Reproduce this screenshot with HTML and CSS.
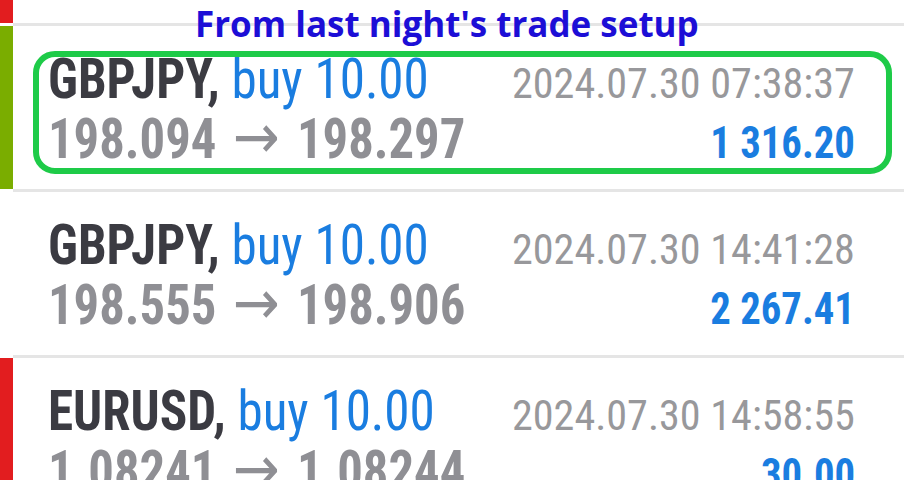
FILE: index.html
```html
<!DOCTYPE html>
<html lang="en">
<head>
<meta charset="utf-8">
<title>Trade history</title>
<link rel="stylesheet" href="styles.css">
</head>
<body>
<div class="screen">
  <h1 class="caption">From last night's trade setup</h1>
  <div class="list">
    <div class="row row-partial">
      <div class="bar bar-red"></div>
      <div class="body"></div>
    </div>
    <div class="row">
      <div class="bar bar-green"></div>
      <div class="body">
        <div class="line">
          <span class="deal"><b class="sym">GBPJPY,</b> <span class="type">buy 10.00</span></span>
          <span class="time">2024.07.30 07:38:37</span>
        </div>
        <div class="line">
          <span class="prices">198.094<span class="arrow">→</span>198.297</span>
          <span class="profit">1 316.20</span>
        </div>
      </div>
      <div class="marker"></div>
    </div>
    <div class="row">
      <div class="bar"></div>
      <div class="body">
        <div class="line">
          <span class="deal"><b class="sym">GBPJPY,</b> <span class="type">buy 10.00</span></span>
          <span class="time">2024.07.30 14:41:28</span>
        </div>
        <div class="line">
          <span class="prices">198.555<span class="arrow">→</span>198.906</span>
          <span class="profit">2 267.41</span>
        </div>
      </div>
    </div>
    <div class="row">
      <div class="bar bar-red"></div>
      <div class="body">
        <div class="line">
          <span class="deal"><b class="sym">EURUSD,</b> <span class="type">buy 10.00</span></span>
          <span class="time">2024.07.30 14:58:55</span>
        </div>
        <div class="line">
          <span class="prices">1.08241<span class="arrow">→</span>1.08244</span>
          <span class="profit">30.00</span>
        </div>
      </div>
    </div>
  </div>
</div>
</body>
</html>
```

FILE: styles.css
```css
* { box-sizing: border-box; }

html, body {
  margin: 0;
  padding: 0;
  background: #ffffff;
}

.screen {
  position: relative;
  width: 904px;
  height: 480px;
  overflow: hidden;
  background: #ffffff;
  font-family: "Roboto Condensed", Roboto, "Liberation Sans", sans-serif;
}

.caption {
  position: absolute;
  top: 2px;
  left: 195px;
  z-index: 3;
  margin: 0;
  font-family: "Open Sans", "Noto Sans", sans-serif;
  font-weight: 700;
  font-size: 35px;
  line-height: 44px;
  color: #1c0ed6;
  white-space: nowrap;
}

.list {
  display: flex;
  flex-direction: column;
}

.row {
  position: relative;
  display: flex;
}

.bar {
  flex: 0 0 13px;
  width: 13px;
  margin-bottom: 3px;
}

.bar-red { background: #e21d1f; }
.bar-green { background: #7aad00; }

.body {
  flex: 1;
  border-bottom: 3px solid #e5e5e5;
  padding: 24px 49px 23px 35px;
}

.row-partial .body {
  height: 26px;
  padding: 0;
}

.row-partial .bar { height: 23px; }

.line {
  display: flex;
  justify-content: space-between;
  align-items: baseline;
  height: 58px;
  line-height: 58px;
  white-space: nowrap;
}

.deal,
.prices,
.profit,
.time {
  display: inline-block;
}

.deal {
  font-size: 56px;
  transform: scaleX(0.913);
  transform-origin: left center;
}

.sym {
  font-weight: 700;
  color: #3b3b42;
}

.type {
  font-weight: 400;
  color: #1a7de0;
}

.time {
  font-size: 43px;
  font-weight: 400;
  color: #98989b;
  transform: scaleX(0.98);
  transform-origin: right center;
}

.prices {
  font-size: 56px;
  font-weight: 700;
  color: #8f8f94;
  transform: scaleX(0.905);
  transform-origin: left center;
}

.arrow {
  font-family: "DejaVu Sans", sans-serif;
  font-weight: 400;
  font-size: 62px;
  margin: 0 19px 0 18px;
}

.profit {
  font-size: 45px;
  font-weight: 700;
  color: #1a7de0;
  transform: scaleX(0.905);
  transform-origin: right center;
}

.marker {
  position: absolute;
  left: 33px;
  top: 25px;
  width: 859px;
  height: 123px;
  border: 6px solid #1ecb48;
  border-radius: 22px;
  pointer-events: none;
}
```
